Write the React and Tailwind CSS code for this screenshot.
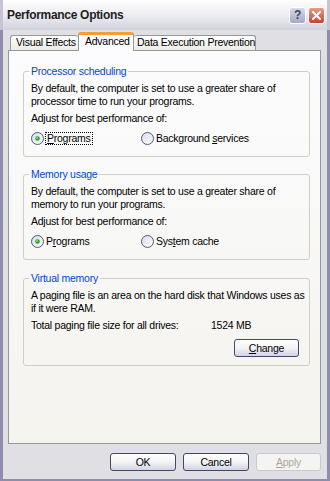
import React from 'react'

const Radio = ({ checked }) => (
  <svg width="13" height="13" viewBox="0 0 13 13" className="shrink-0">
    <defs>
      <linearGradient id="radioFill" x1="0" y1="0" x2="1" y2="1">
        <stop offset="0" stopColor="#d9d9e2" />
        <stop offset="1" stopColor="#ffffff" />
      </linearGradient>
    </defs>
    <circle cx="6.5" cy="6.5" r="6" fill="url(#radioFill)" stroke="#4a5d82" />
    {checked && <circle cx="6.5" cy="6.5" r="2.3" fill="#2aa52a" />}
    {checked && <circle cx="6" cy="6" r="0.9" fill="#8fe08f" />}
  </svg>
)

const Btn = ({ children, disabled, w = 'w-[66px]' }) => (
  <button
    className={
      disabled
        ? `${w} h-[18px] rounded-[3px] border border-[#c9c8d0] bg-[#f5f4f2] text-[#aca899] leading-none`
        : `${w} h-[18px] rounded-[3px] border border-[#3d4a6c] bg-gradient-to-b from-[#ffffff] via-[#f3f3f7] to-[#d4d4e2] text-black leading-none`
    }
  >
    {children}
  </button>
)

const Group = ({ title, className, children }) => (
  <fieldset className={`ml-[14px] w-[287px] rounded-[3px] border border-[#d0d0bf] ${className}`}>
    <legend className="ml-[5px] px-[2px] leading-[13px] text-[#0046d5]">{title}</legend>
    <div className="pl-[7px] pt-[4px]">{children}</div>
  </fieldset>
)

export default function App() {
  return (
    <div className="w-[330px] h-[481px] flex flex-col overflow-hidden bg-[#e0dfe3] text-[10.5px] tracking-[-0.25px] text-black font-['Liberation_Sans',Arial,sans-serif]">
      {/* title bar */}
      <div className="h-[30px] shrink-0 flex items-center justify-between pl-[4px] pr-[2px] bg-gradient-to-b from-[#fefefe] via-[#ececf2] to-[#d2d2dc] border-l-[3px] border-r-[3px] border-[#c4c4d4]">
        <span className="text-[12px] tracking-[-0.3px] font-bold text-[#1e1e24]">Performance Options</span>
        <div className="flex gap-[2px]">
          <div className="w-[17px] h-[17px] rounded-[3px] border border-white bg-gradient-to-b from-[#d8dae8] to-[#a5a9c3] flex items-center justify-center text-[12px] font-bold text-[#3a4466] leading-none">?</div>
          <div className="w-[17px] h-[17px] rounded-[3px] border border-white bg-gradient-to-b from-[#e89a88] to-[#c9402b] flex items-center justify-center">
            <svg width="9" height="9" viewBox="0 0 9 9">
              <path d="M1 1L8 8M8 1L1 8" stroke="#fff" strokeWidth="2" strokeLinecap="square" />
            </svg>
          </div>
        </div>
      </div>

      <div className="flex-1 flex flex-col border-l-[3px] border-r-[3px] border-b-[2px] border-[#8f8dad] pl-[5px] pr-[6px]">
        {/* tabs */}
        <div className="h-[20px] flex items-end pl-[2px] whitespace-nowrap">
          <div className="w-[68px] h-[15px] flex items-center pl-[5px] rounded-t-[3px] border-t border-l border-[#919b9c] bg-gradient-to-b from-[#ffffff] to-[#ecebe5]">Visual Effects</div>
          <div className="relative z-10 w-[56px] h-[19px] -mb-px flex items-center pl-[6px] pb-[2px] rounded-t-[3px] border-t-[3px] border-t-[#f0a038] border-x border-x-[#919b9c] bg-[#fcfcfe]">Advanced</div>
          <div className="w-[122px] h-[15px] flex items-center pl-[3px] rounded-t-[3px] border-t border-r border-[#919b9c] bg-gradient-to-b from-[#ffffff] to-[#ecebe5]">Data Execution Prevention</div>
        </div>

        {/* panel */}
        <div className="h-[394px] shrink-0 border border-[#919b9c] bg-gradient-to-b from-[#fcfcfe] to-[#f4f3ee]">
          <Group title="Processor scheduling" className="mt-[14px] h-[92px]">
            <p className="leading-[13px]">By default, the computer is set to use a greater share of processor time to run your programs.</p>
            <p className="mt-[4px] leading-[13px]">Adjust for best performance of:</p>
            <div className="mt-[7px] h-[13px] flex items-center leading-[13px]">
              <div className="w-[110px] flex items-center gap-[1px]">
                <Radio checked />
                <span className="border border-dotted border-black px-[1px] leading-[11px]"><u>P</u>rograms</span>
              </div>
              <div className="flex items-center gap-[2px]">
                <Radio />
                <span>Background <u>s</u>ervices</span>
              </div>
            </div>
          </Group>

          <Group title="Memory usage" className="mt-[11px] h-[92px]">
            <p className="leading-[13px]">By default, the computer is set to use a greater share of memory to run your programs.</p>
            <p className="mt-[4px] leading-[13px]">Adjust for best performance of:</p>
            <div className="mt-[7px] h-[13px] flex items-center leading-[13px]">
              <div className="w-[110px] flex items-center gap-[2px]">
                <Radio checked />
                <span>P<u>r</u>ograms</span>
              </div>
              <div className="flex items-center gap-[2px]">
                <Radio />
                <span>Sys<u>t</u>em cache</span>
              </div>
            </div>
          </Group>

          <Group title="Virtual memory" className="mt-[12px] h-[94px]">
            <p className="leading-[13px]">A paging file is an area on the hard disk that Windows uses as if it were RAM.</p>
            <div className="mt-[4px] flex leading-[13px]">
              <span className="w-[180px]">Total paging file size for all drives:</span>
              <span>1524 MB</span>
            </div>
            <div className="mt-[7px] flex justify-end pr-[10px]">
              <Btn w="w-[65px]"><u>C</u>hange</Btn>
            </div>
          </Group>
        </div>

        {/* dialog buttons */}
        <div className="mt-[9px] flex justify-end gap-[7px]">
          <Btn>OK</Btn>
          <Btn>Cancel</Btn>
          <Btn disabled w="w-[65px]"><u>A</u>pply</Btn>
        </div>
      </div>
    </div>
  )
}
